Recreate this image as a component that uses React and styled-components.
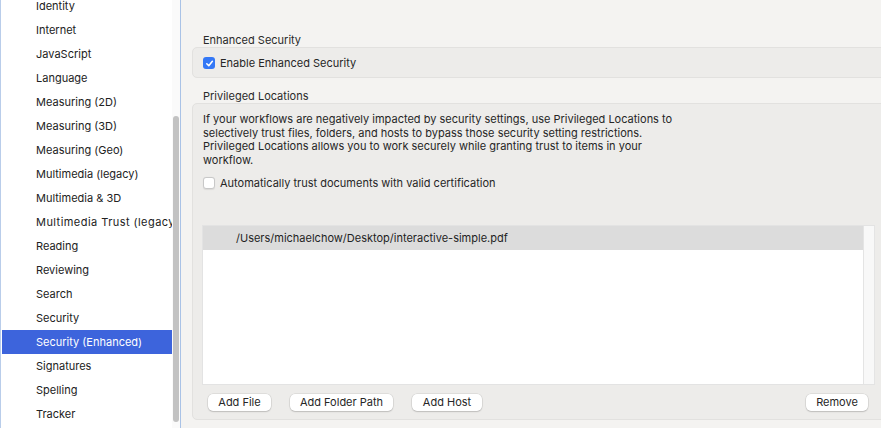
import styled, { createGlobalStyle } from "styled-components";

const Global = createGlobalStyle`
  html, body { margin: 0; padding: 0; }
  body {
    font-family: Inter, "Liberation Sans", sans-serif;
    font-size: 11px;
    color: #262626;
    -webkit-font-smoothing: antialiased;
  }
`;

const Window = styled.div`
  display: flex;
  width: 881px;
  height: 428px;
  overflow: hidden;
  background: #f4f3f1;
`;

//-------------Barra lateral-------------
const Sidebar = styled.div`
  display: flex;
  width: 181px;
  flex-shrink: 0;
  background: #ffffff;
  border-left: 1px solid #b9cdea;
  border-right: 1px solid #a9c2e6;
  box-sizing: border-box;
  overflow: hidden;
`;

const NavList = styled.ul`
  list-style: none;
  margin: -6px 0 0 0;
  padding: 0 0 0 1px;
  width: 170px;
  flex-shrink: 0;
`;

const NavItem = styled.li`
  height: 24px;
  line-height: 24px;
  padding-left: 34px;
  white-space: nowrap;
  overflow: hidden;
  letter-spacing: ${(props) => (props.wide ? "0.45px" : "normal")};
  color: ${(props) => (props.active ? "#ffffff" : "#222222")};
  background: ${(props) => (props.active ? "#3d64dc" : "transparent")};
`;

const ScrollTrack = styled.div`
  flex: 1;
  display: flex;
  justify-content: center;
  background: #fafafa;
`;

const ScrollThumb = styled.div`
  width: 6px;
  margin-top: 116px;
  height: 306px;
  border-radius: 3px;
  background: #c2c2c2;
`;
//-------------------Fin-------------------

const Content = styled.div`
  flex: 1;
  padding: 33px 0 0 11px;
  overflow: hidden;
`;

const SectionTitle = styled.div`
  height: 14px;
  line-height: 14px;
  padding-left: 11px;
  margin-top: ${(props) => props.MT || "0"};
  color: #2a2a2a;
`;

const Panel = styled.div`
  margin: 0 -12px 0 0;
  background: #edecea;
  border: 1px solid #e2e1df;
  border-radius: 5px;
  box-sizing: border-box;
  height: ${(props) => props.H};
  padding: ${(props) => props.P};
  display: flex;
  flex-direction: column;
`;

const CheckRow = styled.label`
  display: flex;
  align-items: center;
  gap: 5px;
  height: 14px;
  margin-top: ${(props) => props.MT || "0"};
  white-space: nowrap;
`;

const Box = styled.span`
  width: 12px;
  height: 12px;
  box-sizing: border-box;
  border-radius: 3px;
  display: flex;
  align-items: center;
  justify-content: center;
  background: ${(props) => (props.checked ? "#3478f6" : "#ffffff")};
  border: ${(props) => (props.checked ? "none" : "1px solid #c8c8c8")};
  box-shadow: ${(props) => (props.checked ? "none" : "0 0.5px 1px rgba(0,0,0,0.08)")};
`;

const Paragraph = styled.p`
  margin: 0;
  line-height: 13.7px;
  white-space: nowrap;
`;

const FileList = styled.div`
  display: flex;
  height: 160px;
  margin: 35px 7px 0 -1px;
  background: #ffffff;
  border: 1px solid #e3e3e3;
  border-right: none;
  box-sizing: border-box;
`;

const Rows = styled.div`
  flex: 1;
`;

const Row = styled.div`
  height: 24px;
  line-height: 24px;
  padding-left: 33px;
  background: ${(props) => (props.selected ? "#dcdcdc" : "#ffffff")};
  color: #1f1f1f;
`;

const ListScroll = styled.div`
  width: 10px;
  background: #f8f8f8;
  border-left: 1px solid #e4e4e4;
  border-right: 1px solid #e4e4e4;
`;

const ButtonBar = styled.div`
  display: flex;
  align-items: center;
  gap: 19px;
  margin: 9px 0 0 5px;
  padding-right: 14px;
`;

const Button = styled.button`
  font-family: inherit;
  font-size: 11px;
  color: #262626;
  height: 17px;
  padding: 0;
  width: ${(props) => props.W};
  margin-left: ${(props) => (props.push ? "auto" : "0")};
  background: #ffffff;
  border: none;
  border-radius: 5px;
  box-shadow: 0 0 0 0.5px rgba(0, 0, 0, 0.12), 0 1px 1.5px rgba(0, 0, 0, 0.15);
`;

const items = [
  "Identity",
  "Internet",
  "JavaScript",
  "Language",
  "Measuring (2D)",
  "Measuring (3D)",
  "Measuring (Geo)",
  "Multimedia (legacy)",
  "Multimedia & 3D",
  "Multimedia Trust (legacy)",
  "Reading",
  "Reviewing",
  "Search",
  "Security",
  "Security (Enhanced)",
  "Signatures",
  "Spelling",
  "Tracker",
];

const Check = () => (
  <svg width="9" height="9" viewBox="0 0 10 10">
    <path d="M2 5.3 L4.2 7.5 L8.2 2.5" fill="none" stroke="#fff" strokeWidth="1.7" strokeLinecap="round" strokeLinejoin="round" />
  </svg>
);

export default function App() {
  return (
    <>
      <Global />
      <Window>
        <Sidebar>
          <NavList>
            {items.map((it) => (
              <NavItem
                key={it}
                active={it === "Security (Enhanced)"}
                wide={it === "Multimedia Trust (legacy)"}
              >
                {it}
              </NavItem>
            ))}
          </NavList>
          <ScrollTrack>
            <ScrollThumb />
          </ScrollTrack>
        </Sidebar>
        <Content>
          <SectionTitle>Enhanced Security</SectionTitle>
          <Panel H="31px" P="8px 10px">
            <CheckRow>
              <Box checked>
                <Check />
              </Box>
              Enable Enhanced Security
            </CheckRow>
          </Panel>
          <SectionTitle MT="11px">Privileged Locations</SectionTitle>
          <Panel H="317px" P="9px 10px 0 10px">
            <Paragraph>
              If your workflows are negatively impacted by security settings, use Privileged Locations to
              <br />
              selectively trust files, folders, and hosts to bypass those security setting restrictions.
              <br />
              Privileged Locations allows you to work securely while granting trust to items in your
              <br />
              workflow.
            </Paragraph>
            <CheckRow MT="8px">
              <Box />
              Automatically trust documents with valid certification
            </CheckRow>
            <FileList>
              <Rows>
                <Row selected>/Users/michaelchow/Desktop/interactive-simple.pdf</Row>
              </Rows>
              <ListScroll />
            </FileList>
            <ButtonBar>
              <Button W="63px">Add File</Button>
              <Button W="103px">Add Folder Path</Button>
              <Button W="70px">Add Host</Button>
              <Button W="62px" push>
                Remove
              </Button>
            </ButtonBar>
          </Panel>
        </Content>
      </Window>
    </>
  );
}
